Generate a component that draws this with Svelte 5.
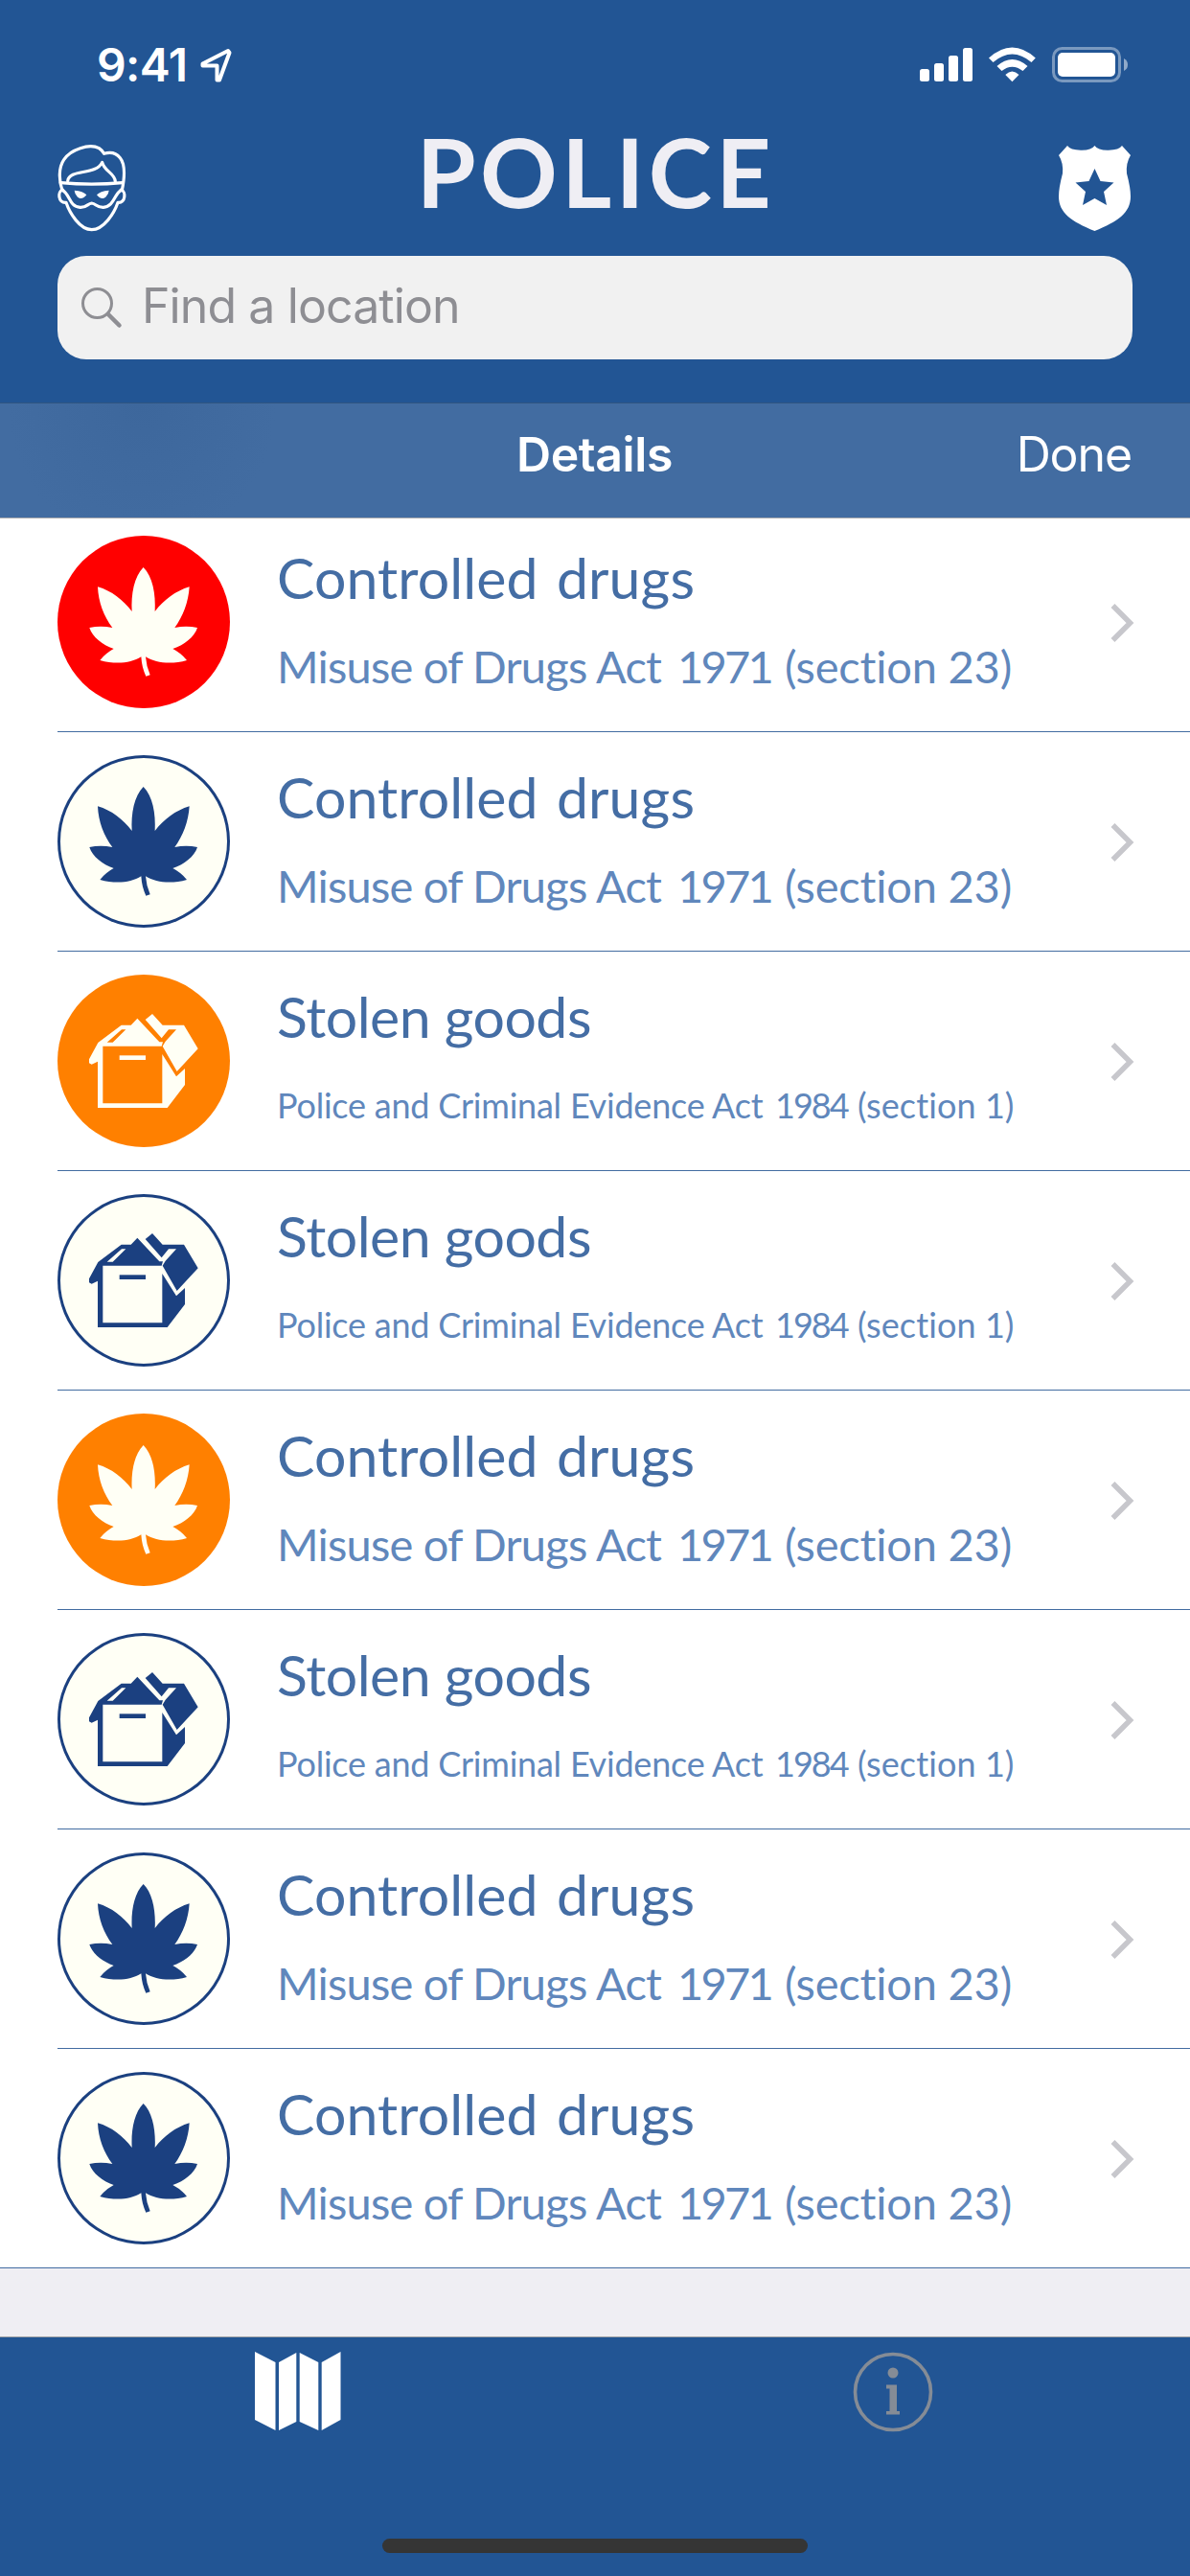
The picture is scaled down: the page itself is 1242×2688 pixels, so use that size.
<script lang="ts">
  type Kind = 'drugs' | 'goods';
  type Tone = 'red' | 'orange' | 'plain';

  const kinds = {
    drugs: { title: 'Controlled drugs', law: ['Misuse of Drugs', 'Act', '1971', '(section 23)'] },
    goods: { title: 'Stolen goods', law: ['Police and Criminal Evidence', 'Act', '1984', '(section 1)'] },
  };

  const rows: { kind: Kind; tone: Tone }[] = [
    { kind: 'drugs', tone: 'red' },
    { kind: 'drugs', tone: 'plain' },
    { kind: 'goods', tone: 'orange' },
    { kind: 'goods', tone: 'plain' },
    { kind: 'drugs', tone: 'orange' },
    { kind: 'goods', tone: 'plain' },
    { kind: 'drugs', tone: 'plain' },
    { kind: 'drugs', tone: 'plain' },
  ];
</script>

<div class="screen">
  <header>
    <div class="status">
      <div class="clock">
        <span class="time">9:41</span>
        <svg class="locate" width="34" height="40" viewBox="0 0 34 40">
          <path d="M30 5 L3.500 18.500 V20.500 H18.500 V35.500 H21 L31.500 7 Z" fill="none" stroke="#fff" stroke-width="4" stroke-linejoin="round" />
        </svg>
      </div>
      <svg class="signals" width="220" height="40" viewBox="959 48 220 40">
        <g fill="#fff">
          <rect x="960" y="72" width="10" height="13" rx="2.500" />
          <rect x="975" y="66" width="10" height="19" rx="2.500" />
          <rect x="990" y="58" width="10" height="27" rx="2.500" />
          <rect x="1005" y="50" width="10" height="35" rx="2.500" />
          <path d="M1032 60.500 Q1056.400 38.500 1080.800 60.500 L1076.500 65 Q1056.400 48 1036.500 65 Z" />
          <path d="M1040.500 69 Q1056.400 55 1072.500 69 L1067.500 74 Q1056.400 65.500 1045.500 74 Z" />
          <path d="M1049.300 78 Q1056.400 71 1063.500 78 L1056.400 85.300 Z" />
          <rect x="1104" y="55" width="60" height="25" rx="5" />
        </g>
        <rect x="1099.500" y="50.500" width="69" height="34" rx="9" fill="none" stroke="#fff" stroke-opacity=".4" stroke-width="3" />
        <path d="M1173 61 Q1177 63 1177 67.500 Q1177 72 1173 74 Z" fill="#fff" fill-opacity=".5" />
      </svg>
    </div>

    <div class="brand">
      <svg class="mask" width="74" height="92" viewBox="57 33 222 276" fill="none" stroke="#fff" stroke-width="9.500" stroke-linejoin="round" stroke-linecap="round">
        <path d="M75 176 C64 145 63 105 80 80 C100 48 160 28 190 44 Q202 52 206 61 C226 55 244 59 256 74 C274 96 269 142 262 176" />
        <path d="M70 152 Q167 161 264 152" />
        <path d="M92 146 C98 108 180 130 200 88 C206 116 240 122 241 148" />
        <path d="M76 174 C60 178 61 217 87 214 C98 247 130 299 167 299 C205 299 238 247 249 214 C274 217 275 178 259 174" />
        <path d="M76 175 C100 190 96 226 131 229 C153 230 154 217 167 216 C181 217 182 230 204 229 C238 226 236 190 259 175" />
        <g fill="#fff" stroke="none">
          <path d="M113 176 Q141 178 151 190 C143 202 130 205 122 196 Q114 188 113 176 Z" />
          <path d="M221 176 Q193 178 183 190 C191 202 204 205 212 196 Q220 188 221 176 Z" />
        </g>
      </svg>
      <h1>POLICE</h1>
      <svg class="badge" width="75" height="89" viewBox="0 0 75 89" fill="#fff" fill-rule="evenodd">
        <path d="M9 0 Q12 4.500 23 4.700 Q34 5 37.500 0 Q41 5 52 4.700 Q63 4.500 66 0 L75 10 Q70 18 71 29 Q75 44 75 53 C75 70 62 79 37.500 89 C13 79 0 70 0 53 Q0 44 4 29 Q5 18 0 10 Z M37.500 24 L31.500 37 L17.500 38.500 L28 48 L25 62 L37.500 55 L50 62 L47 48 L57.500 38.500 L43.500 37 Z" />
      </svg>
    </div>

    <div class="search">
      <svg width="44" height="44" viewBox="0 0 44 44" fill="none" stroke="#8e8e93">
        <circle cx="17.500" cy="17.500" r="15" stroke-width="3" />
        <path d="M29 29 L40.500 40.500" stroke-width="4.500" stroke-linecap="round" />
      </svg>
      <span class="hint">Find a location</span>
    </div>
  </header>

  <nav>
    <span class="heading">Details</span>
    <span class="done">Done</span>
  </nav>

  <main>
    {#each rows as row}
      <div class="row">
        <div class="disc {row.tone}">
          {#if row.kind === 'drugs'}
            <svg viewBox="60 57 540 540" fill="currentColor">
              <path d="M329 156 C300 185 290 240 293 294 C265 258 230 230 186 217 C188 265 205 310 232 345 Q195 337 160 345 C170 375 200 398 236 411 Q210 425 193 447 C240 460 290 457 322 436 Q324 470 337 497 L350 493 Q338 465 336 436 C368 457 420 460 465 447 Q448 425 421 411 C458 398 488 375 498 345 Q463 337 427 345 C453 310 470 265 473 217 C430 230 393 258 365 294 C368 240 358 185 329 156 Z" />
            </svg>
          {:else}
            <svg viewBox="60 51 540 540" fill="currentColor" fill-rule="evenodd">
              <path d="M187 264 L260 209 H290 L310 188 L379 262 H390 L386 275 H202 V454 H388 V300 L432 370 L459 345 V396 L404 468 H186 V323 L167 332 L159 328 V316 Z M215 263 H233 L274 223 H261 Z" />
              <path d="M335 192 L357 174 L389 209 H456 L500 283 L434 354 L389 275 L398 260 L432 223 H408 L386 250 Z" />
              <rect x="254" y="304" width="82" height="14" />
            </svg>
          {/if}
        </div>
        <div class="words {row.kind}">
          <div class="title">{kinds[row.kind].title}</div>
          <div class="law">
            {#each kinds[row.kind].law as part}
              <span>{part}</span>
            {/each}
          </div>
        </div>
        <svg class="chevron" width="26" height="42" viewBox="0 0 26 42">
          <path d="M3.500 3 L21.500 21 L3.500 39" fill="none" stroke="#c7c7cc" stroke-width="5.500" />
        </svg>
      </div>
    {/each}
  </main>

  <footer>
    <div class="tabs">
      <div class="tab">
        <svg width="90" height="83" viewBox="0 0 90 83" fill="#fff">
          <path d="M0 0 L21.500 11 V82 L0 71 Z M25 11 L43.300 1 V73 L25 82 Z M46.700 1 L66.300 11 V82 L46.700 73 Z M69.700 11 L89.500 0 V71 L69.700 82 Z" />
        </svg>
      </div>
      <div class="tab">
        <svg width="84" height="84" viewBox="0 0 84 84" fill="#858c96">
          <circle cx="42" cy="42" r="39.500" fill="none" stroke="#858c96" stroke-width="3.600" />
          <circle cx="42" cy="22" r="5.500" />
          <path d="M35 34.500 H46 V62 H49 V65.500 H35 V62 H38.500 V38.500 H35 Z" />
        </svg>
      </div>
    </div>
    <div class="home"></div>
  </footer>
</div>

<style>
  :global(body) { background: #225594; }
  .screen {
    width: 1242px;
    height: 2688px;
    display: flex;
    flex-direction: column;
    overflow: hidden;
    background: #efeef3;
    font-family: Inter, "Liberation Sans", sans-serif;
    white-space: nowrap;
  }
  svg { display: block; flex: none; }
  header {
    height: 421px;
    box-sizing: border-box;
    background: #225594;
    border-bottom: 1px solid #305580;
    padding: 0 60px;
    flex: none;
  }
  .status {
    height: 132px;
    display: flex;
    justify-content: space-between;
    align-items: flex-start;
    padding: 48px 3px 0 41px;
    box-sizing: border-box;
  }
  .clock { display: flex; gap: 12px; color: #fff; }
  .time {
    width: 95px;
    font-size: 48px;
    line-height: 40px;
    font-weight: 600;
    letter-spacing: -0.6px;
  }
  .brand {
    height: 135px;
    display: flex;
    justify-content: space-between;
    align-items: flex-start;
  }
  .mask { margin: 19px 0 0 -1px; }
  .badge { margin: 20px 2px 0 0; }
  h1 {
    margin: -14px 0 0 6px;
    font: 700 100px/120px Lato, "Open Sans", sans-serif;
    letter-spacing: 4.4px;
    color: #efeef4;
  }
  .search {
    height: 108px;
    border-radius: 30px;
    background: #f1f1f1;
    display: flex;
    align-items: center;
    padding-left: 24px;
    gap: 20px;
    color: #8e8e93;
  }
  .hint { font-size: 50px; letter-spacing: -0.9px; padding-bottom: 4px; }
  nav {
    position: relative;
    z-index: 1;
    height: 120px;
    box-sizing: border-box;
    border-bottom: 1px solid #a8a9ae;
    background: radial-gradient(ellipse 140px 150px at 148px 0, #3d679c, #426ca1);
    color: #fff;
    display: grid;
    grid-template-columns: 1fr auto 1fr;
    padding: 23px 61px 0 60px;
    line-height: 60px;
    font-size: 50px;
    flex: none;
  }
  .heading { grid-column: 2; font-weight: 600; letter-spacing: -0.4px; }
  .done { text-align: right; letter-spacing: -1.1px; }
  main {
    margin-top: -6px;
    background: #fff;
    border-bottom: 1px solid #426ca1;
    flex: none;
  }
  .row {
    height: 229px;
    box-sizing: border-box;
    margin-left: 60px;
    padding-right: 58px;
    border-bottom: 1px solid #426ca1;
    display: flex;
    align-items: flex-start;
  }
  .row:last-child { height: 228px; border-bottom: 0; }
  .disc {
    width: 180px;
    height: 180px;
    margin-top: 24px;
    border-radius: 50%;
    color: #fffff5;
    flex: none;
  }
  .red { background: #f00; }
  .orange { background: #ff8000; }
  .plain { background: #fffff5; color: #1b4080; box-shadow: inset 0 0 0 3px #1b4080; }
  .words {
    flex: 1;
    padding: 28px 0 0 49px;
    font-family: Lato, "Open Sans", sans-serif;
    font-variant-ligatures: none;
  }
  .title {
    font-size: 59px;
    line-height: 80px;
    color: #446da4;
  }
  .drugs .title { letter-spacing: 0.1px; word-spacing: 4px; }
  .goods .title { letter-spacing: -0.5px; }
  .law {
    line-height: 60px;
    margin-top: 22px;
    color: #6087bc;
    display: grid;
  }
  .drugs .law {
    font-size: 47px;
    letter-spacing: -0.8px;
    grid-template-columns: 333px 85px 112px auto;
  }
  .drugs .law span:nth-child(3) { letter-spacing: -2.8px; }
  .drugs .law span:nth-child(4) { letter-spacing: -0.2px; }
  .goods .law {
    font-size: 36px;
    letter-spacing: -0.22px;
    grid-template-columns: 454px 66px 86px auto;
  }
  .goods .law span:nth-child(3) { letter-spacing: -2px; }
  .goods .law span:nth-child(4) { letter-spacing: 0.1px; }
  .chevron { margin-top: 94px; }
  footer {
    margin-top: auto;
    height: 250px;
    box-sizing: border-box;
    background: #225594;
    border-top: 1px solid #a0a2a6;
    display: flex;
    flex-direction: column;
    align-items: center;
    justify-content: space-between;
    padding: 15px 0 24px;
    flex: none;
  }
  .tabs { display: flex; width: 100%; }
  .tab { flex: 1; display: flex; justify-content: center; }
  .home { width: 444px; height: 15px; border-radius: 8px; background: #353535; }
</style>
